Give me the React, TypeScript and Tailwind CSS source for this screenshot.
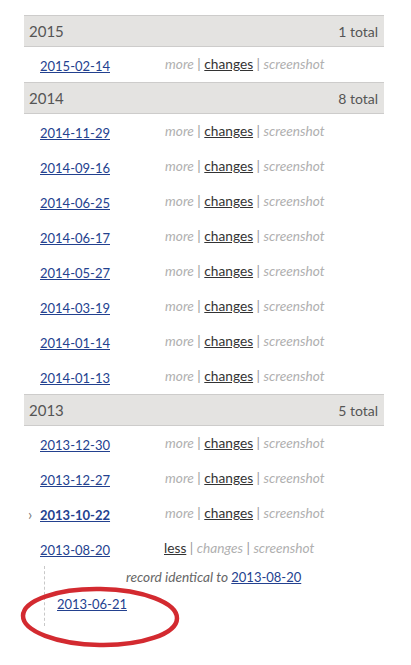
import React from "react";

type Row = { date: string; bold?: boolean; arrow?: boolean };
type Group = { year: string; total: string; rows: Row[] };

const groups: Group[] = [
  { year: "2015", total: "1 total", rows: [{ date: "2015-02-14" }] },
  {
    year: "2014",
    total: "8 total",
    rows: [
      { date: "2014-11-29" },
      { date: "2014-09-16" },
      { date: "2014-06-25" },
      { date: "2014-06-17" },
      { date: "2014-05-27" },
      { date: "2014-03-19" },
      { date: "2014-01-14" },
      { date: "2014-01-13" },
    ],
  },
  {
    year: "2013",
    total: "5 total",
    rows: [
      { date: "2013-12-30" },
      { date: "2013-12-27" },
      { date: "2013-10-22", bold: true, arrow: true },
    ],
  },
];

function Header({ year, total }: { year: string; total: string }) {
  return (
    <div className="h-[32px] border-y border-[#cdcccb] bg-[#e4e3e1] flex items-baseline justify-between pl-[5px] pr-[6px] pt-[4px]">
      <span className="text-[15px] text-[#555]">{year}</span>
      <span className="text-[14px] text-[#555]">{total}</span>
    </div>
  );
}

function Actions() {
  return (
    <span className="text-[13.7px]">
      <span className="italic text-[#b0b0b0]">more</span>
      <span className="text-[#999]"> | </span>
      <span className="underline text-[#333]">changes</span>
      <span className="text-[#999]"> | </span>
      <span className="italic text-[#b0b0b0]">screenshot</span>
    </span>
  );
}

function DataRow({ row }: { row: Row }) {
  return (
    <div className="h-[35px] flex items-center relative">
      {row.arrow && (
        <span className="absolute left-[4px] top-[7px] text-[15px] text-[#777]">›</span>
      )}
      <div className="w-[141px] pl-[16px]">
        <a
          className={
            "underline text-[13px] text-[#23418f] " + (row.bold ? "font-bold" : "")
          }
        >
          {row.date}
        </a>
      </div>
      <Actions />
    </div>
  );
}

export default function App() {
  return (
    <div
      className="w-[411px] h-[665px] bg-white relative"
      style={{ fontFamily: "Lato, 'Open Sans', sans-serif" }}
    >
      <div className="pt-[15px] ml-[24px] w-[360px]">
        {groups.map((g) => (
          <div key={g.year}>
            <Header year={g.year} total={g.total} />
            {g.rows.map((r) => (
              <DataRow key={r.date} row={r} />
            ))}
          </div>
        ))}
        <div className="h-[35px] flex items-center">
          <div className="w-[140px] pl-[16px]">
            <a className="underline text-[13px] text-[#23418f]">2013-08-20</a>
          </div>
          <span className="text-[13.7px]">
            <span className="underline text-[#333]">less</span>
            <span className="text-[#999]"> | </span>
            <span className="italic text-[#b0b0b0]">changes</span>
            <span className="text-[#999]"> | </span>
            <span className="italic text-[#b0b0b0]">screenshot</span>
          </span>
        </div>
        <div className="ml-[20px] border-l border-dashed border-[#c8c8c8] h-[60px] pl-[12px]">
          <div className="pl-[69px] pt-[2px] text-[13.7px] italic text-[#666] leading-[18px]">
            record identical to{" "}
            <a className="not-italic underline text-[13px] text-[#23418f]">2013-08-20</a>
          </div>
          <div className="pt-[8px] leading-[18px]">
            <a className="underline text-[13px] text-[#23418f]">2013-06-21</a>
          </div>
        </div>
      </div>
      <svg
        className="absolute left-0 top-0 pointer-events-none"
        width="411"
        height="665"
      >
        <ellipse
          cx="100"
          cy="617"
          rx="77"
          ry="28"
          fill="none"
          stroke="#d32a30"
          strokeWidth="4.5"
          transform="rotate(1 100 617)"
        />
      </svg>
    </div>
  );
}
